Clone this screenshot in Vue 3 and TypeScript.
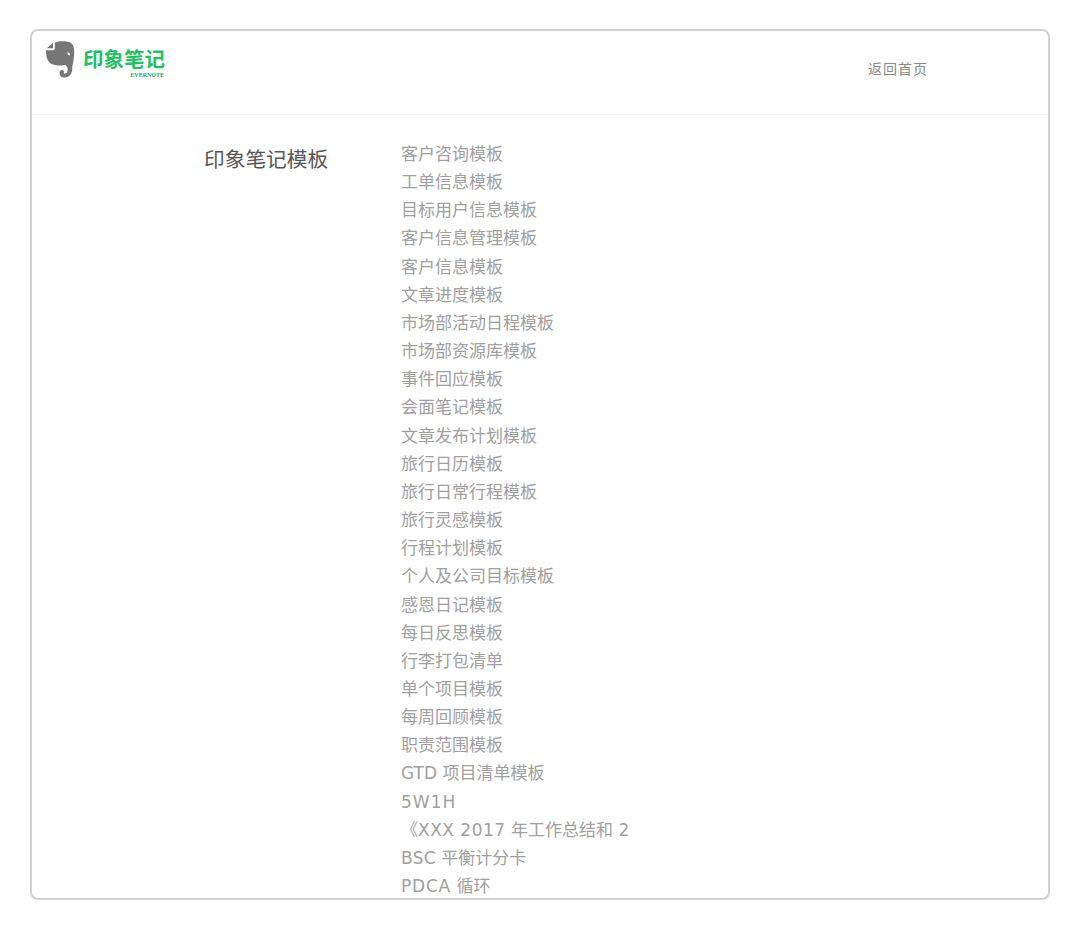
<script setup lang="ts">
interface Part { text: string; track: number }

const rows: string[] = [
  '客户咨询模板','工单信息模板','目标用户信息模板','客户信息管理模板','客户信息模板','文章进度模板',
  '市场部活动日程模板','市场部资源库模板','事件回应模板','会面笔记模板','文章发布计划模板','旅行日历模板',
  '旅行日常行程模板','旅行灵感模板','行程计划模板','个人及公司目标模板','感恩日记模板','每日反思模板',
  '行李打包清单','单个项目模板','每周回顾模板','职责范围模板','GTD 项目清单模板','5W1H',
  '《XXX 2017 年工作总结和 2','BSC 平衡计分卡','PDCA 循环'
]

const tracking: Record<string, number> = { '5W1H': 1, 'XXX 2017': 0.5, 'PDCA': 0.8, 'BSC': 0.3 }

const items: { key: string; parts: Part[] }[] = rows.map((row) => ({
  key: row,
  parts: row
    .split(/([A-Z0-9][A-Z0-9 ]*[A-Z0-9])/)
    .filter(Boolean)
    .map((text) => ({ text, track: tracking[text] ?? 0 }))
}))
</script>

<template>
  <div class="page">
    <div class="window">
      <header class="head">
        <div class="logo">
          <svg class="elephant" width="30" height="38" viewBox="0 0 32 40" aria-hidden="true">
            <path fill="#767676" d="M8.5 1.5 L8.5 7.5 L2 7.5 Z"/>
            <path fill="#767676" fill-rule="evenodd" d="M10.5 1.5 C15 -0.5 24 -0.5 28 2 C31 4 31.5 9 31 15 C30.6 20 30 24 29 27 C29.5 32 28 37 23 38.5 C19 39.5 15.5 37.5 15.5 33.5 C15.5 30.5 19.5 29.5 20.5 32.5 C20 33.5 19.5 34.5 21 34.5 C24 34.5 25 30 23.5 27 C22 25 20.5 25 19 25.5 C14 26.5 8 25.5 5 23 C2 20 1 15 1 9.5 L9 9.5 C10.5 9.5 10.5 8 10.5 7 Z M24 12 C25.8 11.5 27 13 26.5 14.8 C25 15 23.8 14 24 12 Z"/>
          </svg>
          <div class="mark">
            <span class="name">印象笔记</span>
            <span class="sub">EVERNOTE</span>
          </div>
        </div>
        <a class="back">返回首页</a>
      </header>
      <main class="body">
        <h1 class="title">印象笔记模板</h1>
        <ul class="list">
          <li v-for="item in items" :key="item.key"><span v-for="(part, i) in item.parts" :key="i" :style="{ letterSpacing: part.track + 'px' }">{{ part.text }}</span></li>
        </ul>
      </main>
    </div>
  </div>
</template>

<style>
html, body { margin: 0; background: #fff; }
</style>

<style scoped>
.page {
  width: 1080px;
  height: 930px;
  padding: 29px 30px 0;
  box-sizing: border-box;
  font-family: Inter, "Noto Sans CJK SC", sans-serif;
  overflow: hidden;
}
.window {
  height: 871px;
  box-sizing: border-box;
  border: 2px solid #d2d2d2;
  border-radius: 8px;
  overflow: hidden;
  background: #fff;
}
.head {
  height: 84px;
  box-sizing: border-box;
  border-bottom: 1px solid #f3f3f3;
  display: flex;
  justify-content: space-between;
  padding: 10px 120px 0 13px;
}
.logo { display: flex; gap: 8px; align-items: flex-start; }
.mark { display: flex; flex-direction: column; align-items: flex-end; padding-top: 5px; }
.name { font-size: 20.5px; line-height: 28px; font-weight: 700; color: #1fc263; white-space: nowrap; }
.sub { font-family: "Liberation Serif", serif; font-size: 6px; line-height: 6px; font-weight: 700; color: #22a858; margin-top: -2px; margin-right: 1px; }
.back { font-size: 14px; line-height: 20px; color: #8a8a8a; margin-top: 18px; letter-spacing: 1px; }
.body { display: flex; padding: 25px 0 0 172px; }
.title { margin: 6px 0 0; width: 197px; font-size: 20.7px; line-height: 28px; font-weight: 400; color: #555; white-space: nowrap; }
.list { list-style: none; margin: 0; padding: 0; font-family: "DejaVu Sans", "Noto Sans CJK SC", sans-serif; font-size: 17px; line-height: 28.15px; color: #a0a0a0; }
.list li { white-space: nowrap; }
</style>
